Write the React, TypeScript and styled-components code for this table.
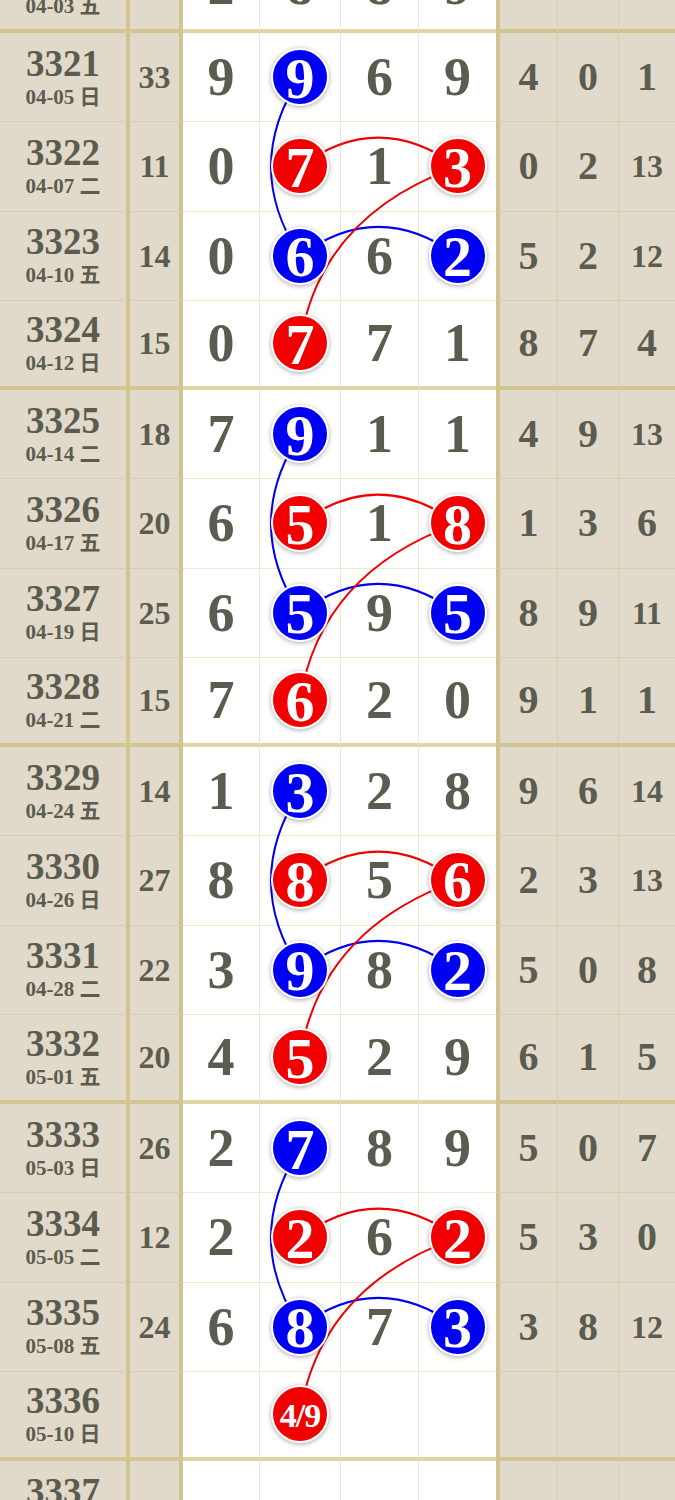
import React from 'react';
import styled, { createGlobalStyle } from 'styled-components';

type Ball = { v: string; c: 'r' | 'b' };
type Digit = string | Ball;

interface DrawRow {
  no: string;
  date: string;
  sum: string;
  d: Digit[];
  t: string[];
}

const ROW_H = 89.25;
const INK = '#5b5c50';
const TAN = '#e1d9c9';
const LINE_THIN = 'rgba(202, 183, 104, 0.32)';
const LINE_THICK = 'rgba(200, 180, 100, 0.56)';

const R = (v: string): Ball => ({ v, c: 'r' });
const B = (v: string): Ball => ({ v, c: 'b' });

const rows: DrawRow[] = [
  { no: '3320', date: '04-03 五', sum: '', d: ['2', '8', '8', '9'], t: ['7', '9', '5'] },
  { no: '3321', date: '04-05 日', sum: '33', d: ['9', B('9'), '6', '9'], t: ['4', '0', '1'] },
  { no: '3322', date: '04-07 二', sum: '11', d: ['0', R('7'), '1', R('3')], t: ['0', '2', '13'] },
  { no: '3323', date: '04-10 五', sum: '14', d: ['0', B('6'), '6', B('2')], t: ['5', '2', '12'] },
  { no: '3324', date: '04-12 日', sum: '15', d: ['0', R('7'), '7', '1'], t: ['8', '7', '4'] },
  { no: '3325', date: '04-14 二', sum: '18', d: ['7', B('9'), '1', '1'], t: ['4', '9', '13'] },
  { no: '3326', date: '04-17 五', sum: '20', d: ['6', R('5'), '1', R('8')], t: ['1', '3', '6'] },
  { no: '3327', date: '04-19 日', sum: '25', d: ['6', B('5'), '9', B('5')], t: ['8', '9', '11'] },
  { no: '3328', date: '04-21 二', sum: '15', d: ['7', R('6'), '2', '0'], t: ['9', '1', '1'] },
  { no: '3329', date: '04-24 五', sum: '14', d: ['1', B('3'), '2', '8'], t: ['9', '6', '14'] },
  { no: '3330', date: '04-26 日', sum: '27', d: ['8', R('8'), '5', R('6')], t: ['2', '3', '13'] },
  { no: '3331', date: '04-28 二', sum: '22', d: ['3', B('9'), '8', B('2')], t: ['5', '0', '8'] },
  { no: '3332', date: '05-01 五', sum: '20', d: ['4', R('5'), '2', '9'], t: ['6', '1', '5'] },
  { no: '3333', date: '05-03 日', sum: '26', d: ['2', B('7'), '8', '9'], t: ['5', '0', '7'] },
  { no: '3334', date: '05-05 二', sum: '12', d: ['2', R('2'), '6', R('2')], t: ['5', '3', '0'] },
  { no: '3335', date: '05-08 五', sum: '24', d: ['6', B('8'), '7', B('3')], t: ['3', '8', '12'] },
  { no: '3336', date: '05-10 日', sum: '', d: ['', R('4/9'), '', ''], t: ['', '', ''] },
  { no: '3337', date: '05-12 二', sum: '', d: ['', '', '', ''], t: ['', '', ''] },
];

// every 4th draw closes a block with a heavier rule
const isThick = (i: number) => i % 4 === 0;

const GlobalStyle = createGlobalStyle`
  html, body {
    margin: 0;
    padding: 0;
    background: #ffffff;
  }
  body {
    font-family: "Liberation Serif", "Noto Sans CJK SC", serif;
  }
`;

const Page = styled.div`
  width: 675px;
  height: 1500px;
  overflow: hidden;
`;

const Table = styled.div`
  position: relative;
  margin-top: -56.25px;
`;

const RowGrid = styled.div`
  display: grid;
  grid-template-columns: 130px 53px 77px 81px 78px 77px 62px 61px 56px;
  height: ${ROW_H}px;
`;

const Cell = styled.div<{ $tan?: boolean; $right?: number; $left?: number; $bottom: number }>`
  box-sizing: border-box;
  display: flex;
  align-items: center;
  justify-content: center;
  background: ${(p) => (p.$tan ? TAN : '#ffffff')};
  border-bottom: ${(p) => p.$bottom}px solid ${(p) => (p.$bottom > 1 ? LINE_THICK : LINE_THIN)};
  border-right: ${(p) => p.$right || 0}px solid ${(p) => ((p.$right || 0) > 1 ? LINE_THICK : LINE_THIN)};
  border-left: ${(p) => p.$left || 0}px solid ${LINE_THICK};
  color: ${INK};
  font-weight: 700;
`;

const IssueCell = styled(Cell)`
  flex-direction: column;
`;

const IssueNo = styled.div`
  font-size: 37px;
  line-height: 36px;
`;

const IssueDate = styled.div`
  font-size: 21px;
  line-height: 24px;
  margin-top: 3px;
  font-family: "Liberation Serif", "Noto Sans CJK SC", serif;
`;

const SumText = styled.span`
  font-size: 32px;
  line-height: 1;
`;

const BigDigit = styled.span`
  font-size: 54px;
  line-height: 1;
`;

const TailDigit = styled.span<{ $wide: boolean }>`
  font-size: ${(p) => (p.$wide ? 32 : 40)}px;
  line-height: 1;
`;

const BallDot = styled.div<{ $c: 'r' | 'b'; $small: boolean }>`
  position: relative;
  z-index: 2;
  box-sizing: border-box;
  width: 58px;
  height: 58px;
  border-radius: 50%;
  border: 2px solid #ffffff;
  background: ${(p) => (p.$c === 'r' ? '#f00000' : '#0000f2')};
  box-shadow: 0 1px 5px rgba(0, 0, 0, 0.35);
  color: #ffffff;
  display: flex;
  align-items: center;
  justify-content: center;
  font-size: ${(p) => (p.$small ? 34 : 58)}px;
  letter-spacing: ${(p) => (p.$small ? '-1px' : '0')};
  line-height: 1;
  padding-top: 3px;
`;

const Links = styled.svg`
  position: absolute;
  left: 0;
  top: 0;
  z-index: 1;
  pointer-events: none;
`;

const W1 = 300;
const W3 = 457.5;

const centerY = (i: number) => i * ROW_H + (ROW_H - (isThick(i) ? 4 : 1)) / 2;

const Connections = () => {
  const paths: { d: string; c: string }[] = [];
  [1, 5, 9, 13].forEach((g) => {
    const a = centerY(g);
    const b = centerY(g + 1);
    const c = centerY(g + 2);
    const d = centerY(g + 3);
    paths.push({ d: `M ${W1} ${a} Q ${W1 - 58} ${(a + c) / 2} ${W1} ${c}`, c: '#0000f2' });
    paths.push({ d: `M ${W1} ${b} Q 378 ${b - 58} ${W3} ${b}`, c: '#f00000' });
    paths.push({ d: `M ${W1} ${c} Q 378 ${c - 58} ${W3} ${c}`, c: '#0000f2' });
    paths.push({ d: `M ${W3} ${b} Q 320 ${b + 49} ${W1} ${d}`, c: '#f00000' });
  });
  const h = rows.length * ROW_H;
  return (
    <Links width={675} height={h} viewBox={`0 0 675 ${h}`}>
      {paths.map((p, i) => (
        <path key={i} d={p.d} fill="none" stroke={p.c} strokeWidth={2} />
      ))}
    </Links>
  );
};

const renderDigit = (dg: Digit) => {
  if (typeof dg === 'string') return dg ? <BigDigit>{dg}</BigDigit> : null;
  return (
    <BallDot $c={dg.c} $small={dg.v.length > 1}>
      {dg.v}
    </BallDot>
  );
};

const App = () => {
  return (
    <>
      <GlobalStyle />
      <Page>
        <Table>
          {rows.map((r, i) => {
            const bottom = isThick(i) ? 4 : 1;
            return (
              <RowGrid key={r.no}>
                <IssueCell $tan $right={4} $bottom={bottom}>
                  <IssueNo>{r.no}</IssueNo>
                  <IssueDate>{r.date}</IssueDate>
                </IssueCell>
                <Cell $tan $right={4} $bottom={bottom}>
                  <SumText>{r.sum}</SumText>
                </Cell>
                {r.d.map((dg, j) => (
                  <Cell key={j} $right={j < 3 ? 1 : 0} $bottom={bottom}>
                    {renderDigit(dg)}
                  </Cell>
                ))}
                {r.t.map((v, j) => (
                  <Cell key={`t${j}`} $tan $left={j === 0 ? 4 : 0} $right={j < 2 ? 1 : 0} $bottom={bottom}>
                    <TailDigit $wide={v.length > 1}>{v}</TailDigit>
                  </Cell>
                ))}
              </RowGrid>
            );
          })}
          <Connections />
        </Table>
      </Page>
    </>
  );
};

export default App;
